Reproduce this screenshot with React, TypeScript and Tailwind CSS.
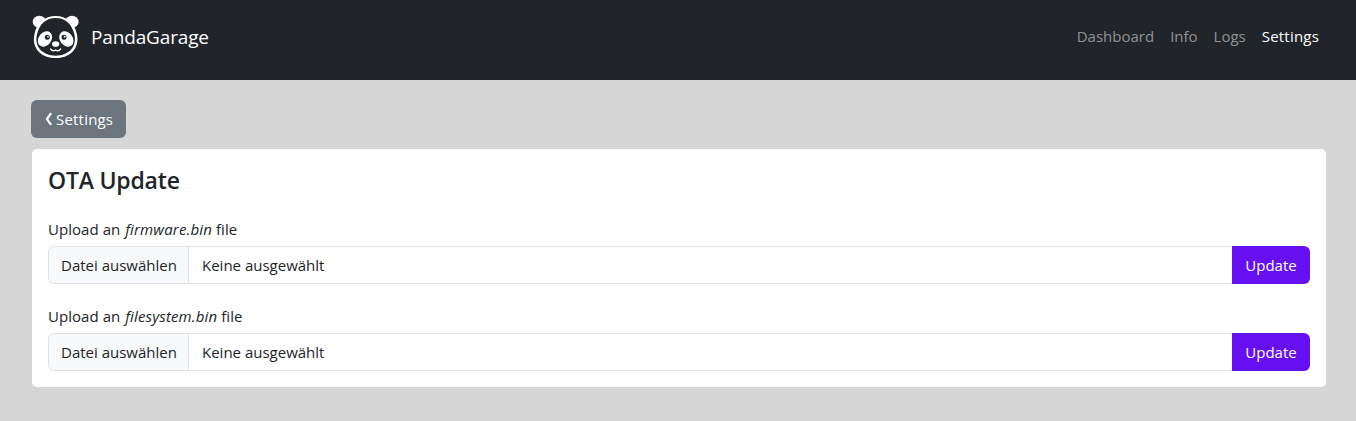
import React from "react";

function PandaLogo() {
  return (
    <svg width="48" height="48" viewBox="33 24 144 144" fill="none" aria-hidden="true">
      <g fill="#fff">
        <ellipse cx="58" cy="50" rx="20" ry="18" />
        <ellipse cx="156" cy="50" rx="20" ry="18" />
        <path d="M107 33C140 33 163 53 170 85C181 126 153 159 107 159C61 159 33 126 44 85C51 53 74 33 107 33Z" />
      </g>
      <path
        d="M107 39C136 39 156 57 163 88C172 125 147 152 107 152C67 152 42 125 51 88C58 57 78 39 107 39Z"
        fill="#212529"
      />
      <g fill="#fff">
        <ellipse cx="75" cy="102" rx="19" ry="25" transform="rotate(38 75 102)" />
        <ellipse cx="139" cy="102" rx="19" ry="25" transform="rotate(-38 139 102)" />
        <ellipse cx="107" cy="117" rx="11" ry="8.5" />
      </g>
      <circle cx="82" cy="97" r="7.5" fill="#212529" />
      <circle cx="132" cy="97" r="7.5" fill="#212529" />
      <circle cx="84" cy="95" r="2.5" fill="#fff" />
      <circle cx="134" cy="95" r="2.5" fill="#fff" />
      <path d="M92 132Q99 141 107 135Q115 141 122 132" stroke="#fff" strokeWidth="4" strokeLinecap="round" />
    </svg>
  );
}

function UploadRow({ name, className }: { name: string; className: string }) {
  return (
    <div className={className}>
      <p className="mb-[5px] h-6 tracking-[0.05px]">
        Upload an <em className="ml-px tracking-[0.15px]">{name}</em> file
      </p>
      <div className="flex h-[38px]">
        <label className="flex flex-1 overflow-hidden rounded-l-md border border-r-0 border-[#dee2e6]">
          <span className="flex w-[140px] items-center border-r border-[#dee2e6] bg-[#f8f9fa] pl-3">Datei auswählen</span>
          <span className="flex items-center pl-[13px]">Keine ausgewählt</span>
        </label>
        <button className="w-[78px] rounded-r-md bg-[#6610f2] text-white">Update</button>
      </div>
    </div>
  );
}

export default function App() {
  return (
    <div className="flex min-h-[421px] flex-col bg-[#d6d6d6] font-['Open_Sans',sans-serif] text-[15px] leading-6 text-[#212529]">
      <nav className="flex h-20 items-start justify-between bg-[#212529] pr-[37px] pl-[31px]">
        <a className="flex items-center pt-[13px] text-white">
          <PandaLogo />
          <span className="ml-3 text-[19px] tracking-[-0.15px]">PandaGarage</span>
        </a>
        <div className="flex gap-4 pt-6 text-[#909294]">
          <a>Dashboard</a>
          <a>Info</a>
          <a>Logs</a>
          <a className="tracking-[0.2px] text-white">Settings</a>
        </div>
      </nav>
      <main className="px-[31px] pt-5">
        <button className="flex h-[38px] w-[95px] items-center rounded-md bg-[#6c757d] pl-[13px] tracking-[0.2px] text-white">
          <svg width="9" height="14" viewBox="0 0 9 14" fill="none" className="mr-[3px]">
            <path d="M7.2 1.2Q5 3.5 3 7Q5 10.5 7.2 12.8" stroke="currentColor" strokeWidth="2.3" />
          </svg>
          Settings
        </button>
        <section className="mt-[11px] mr-[-1px] ml-px h-[238px] rounded-[5px] bg-white px-4 pt-[15px]">
          <h1 className="text-[23px] leading-8 font-semibold tracking-[-0.2px]">OTA Update</h1>
          <UploadRow name="firmware.bin" className="mt-[21px]" />
          <UploadRow name="filesystem.bin" className="mt-5" />
        </section>
      </main>
    </div>
  );
}
